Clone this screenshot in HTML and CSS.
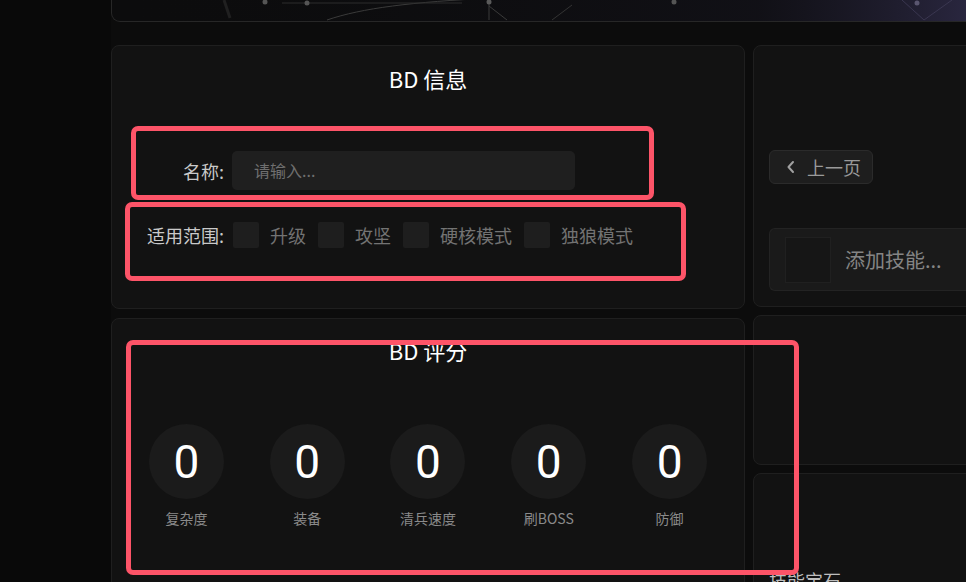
FILE: index.html
```html
<!DOCTYPE html>
<html lang="zh">
<head>
<meta charset="utf-8">
<title>BD</title>
<link rel="stylesheet" href="styles.css">
</head>
<body>
<div class="app">
  <aside class="sidebar"></aside>
  <main class="main">
    <div class="banner">
      <svg class="banner-art" width="860" height="21" viewBox="0 0 860 21">
        <defs>
          <linearGradient id="glow" x1="0" x2="1" y1="0" y2="0">
            <stop offset="0" stop-color="#0c0c0e" stop-opacity="0"/>
            <stop offset="0.75" stop-color="#14131c" stop-opacity="0.6"/>
            <stop offset="1" stop-color="#2a2740"/>
          </linearGradient>
        </defs>
        <rect x="0" y="0" width="860" height="21" fill="url(#glow)"/>
        <path d="M112 0 L118 18" stroke="#333" stroke-width="3" fill="none" opacity="0.5"/>
        <path d="M215 20 C250 8 300 2 380 -2" stroke="#3a3a3a" stroke-width="1" fill="none"/>
        <path d="M170 3 L350 3" stroke="#2c2c2c" stroke-width="1"/>
        <path d="M377 0 L377 20 M377 6 L395 20" stroke="#3a3a3a" stroke-width="1" fill="none"/>
        <path d="M440 20 L460 5" stroke="#333" stroke-width="1" fill="none"/>
        <path d="M790 0 L812 20 L840 0" stroke="#3a3650" stroke-width="1" fill="none"/>
        <circle cx="153" cy="2" r="2.5" fill="#555"/>
        <circle cx="195" cy="3" r="2.5" fill="#555"/>
        <circle cx="377" cy="2" r="2.5" fill="#5a5a5a"/>
        <circle cx="562" cy="2" r="2.5" fill="#555"/>
        <circle cx="805" cy="3" r="2.5" fill="#5a5670"/>
      </svg>
    </div>
    <div class="grid">
      <div class="col">
        <section class="card card-info">
          <h2 class="card-title">BD 信息</h2>
          <div class="form">
            <div class="form-row row-name">
              <label class="form-label">名称:</label>
              <div class="input">请输入...</div>
            </div>
            <div class="form-row row-scope">
              <label class="form-label">适用范围:</label>
              <div class="options">
                <span class="option"><span class="check"></span>升级</span>
                <span class="option"><span class="check"></span>攻坚</span>
                <span class="option"><span class="check"></span>硬核模式</span>
                <span class="option"><span class="check"></span>独狼模式</span>
              </div>
            </div>
          </div>
        </section>
        <section class="card card-score">
          <h2 class="card-title">BD 评分</h2>
          <div class="scores">
            <div class="score"><div class="score-circle">0</div><div class="score-label">复杂度</div></div>
            <div class="score"><div class="score-circle">0</div><div class="score-label">装备</div></div>
            <div class="score"><div class="score-circle">0</div><div class="score-label">清兵速度</div></div>
            <div class="score"><div class="score-circle">0</div><div class="score-label">刷BOSS</div></div>
            <div class="score"><div class="score-circle">0</div><div class="score-label">防御</div></div>
          </div>
        </section>
      </div>
      <div class="col">
        <section class="card card-skills">
          <button class="prev-btn">
            <svg width="10" height="14" viewBox="0 0 10 14"><path d="M7 2 L2.5 7 L7 12" stroke="#a0a0a0" stroke-width="2" fill="none" stroke-linecap="round" stroke-linejoin="round"/></svg>
            <span>上一页</span>
          </button>
          <div class="skill-add">
            <span class="skill-slot"></span>
            <span class="skill-text">添加技能...</span>
          </div>
        </section>
        <section class="card card-mid"></section>
        <section class="card card-gems">
          <div class="gems-title">技能宝石</div>
        </section>
      </div>
    </div>
  </main>
  <div class="mark mark-1"></div>
  <div class="mark mark-2"></div>
  <div class="mark mark-3"></div>
</div>
</body>
</html>
```

FILE: styles.css
```css
* { box-sizing: border-box; }
html, body {
  margin: 0;
  padding: 0;
  background: #0b0b0b;
}
body {
  font-family: "Noto Sans CJK SC", "Noto Sans", sans-serif;
  color: #ddd;
}
.app {
  position: relative;
  display: flex;
  width: 966px;
  height: 582px;
  overflow: hidden;
}
.sidebar {
  flex: none;
  width: 111px;
  background: #090909;
}
.main {
  flex: none;
  width: 1100px;
  display: flex;
  flex-direction: column;
  background: #0c0c0c;
}
.banner {
  flex: none;
  height: 22px;
  border: 1px solid #272727;
  border-top: none;
  border-radius: 0 0 9px 9px;
  background: #0c0c0d;
  overflow: hidden;
}
.banner-art { display: block; }
.grid {
  flex: none;
  margin-top: 23px;
  display: grid;
  grid-template-columns: 634px 420px;
  column-gap: 8px;
}
.col {
  display: flex;
  flex-direction: column;
  gap: 8px;
}
.col:first-child { gap: 9px; }
.card {
  flex: none;
  background: #121212;
  border: 1px solid #1f1f1f;
  border-radius: 8px;
}
.card-title {
  margin: 0;
  padding-top: 17px;
  text-align: center;
  font-size: 22px;
  line-height: 30px;
  font-weight: 400;
  color: #fff;
}
.card-info { height: 264px; }
.form {
  margin-top: 58px;
  padding-left: 19px;
  display: flex;
  flex-direction: column;
  gap: 32px;
}
.form-row {
  display: flex;
  align-items: center;
  gap: 8px;
}
.form-label {
  flex: none;
  width: 93px;
  text-align: right;
  font-size: 18px;
  color: #c9c9c9;
}
.input {
  flex: none;
  width: 343px;
  height: 39px;
  border-radius: 5px;
  background: #1f1f1f;
  padding-left: 22px;
  font-size: 16px;
  line-height: 39px;
  color: #6f6f6f;
}
.options {
  display: flex;
  align-items: center;
  gap: 12px;
  margin-left: 1px;
}
.option {
  display: flex;
  align-items: center;
  gap: 11px;
  font-size: 18px;
  color: #737373;
}
.check {
  flex: none;
  width: 26px;
  height: 26px;
  border-radius: 2px;
  background: #1e1e1e;
}
.card-score { height: 300px; }
.card-score .card-title { padding-top: 16px; }
.scores {
  margin-top: 59px;
  padding: 0 14px;
  display: flex;
}
.score {
  flex: 1;
  display: flex;
  flex-direction: column;
  align-items: center;
}
.score-circle {
  flex: none;
  width: 75px;
  height: 75px;
  border-radius: 50%;
  background: #1b1b1b;
  display: flex;
  align-items: center;
  justify-content: center;
  font-family: Roboto, "Noto Sans", sans-serif;
  font-size: 46px;
  color: #fff;
}
.score-label {
  margin-top: 9px;
  font-size: 14px;
  line-height: 20px;
  color: #8a8a8a;
}
.card-skills {
  height: 262px;
  padding: 104px 0 0 15px;
}
.prev-btn {
  display: flex;
  align-items: center;
  gap: 11px;
  width: 104px;
  height: 34px;
  padding: 0 0 0 16px;
  border: 1px solid #2b2b2b;
  border-radius: 6px;
  background: #1e1e1e;
  font-family: inherit;
  font-size: 18px;
  color: #9a9a9a;
}
.skill-add {
  margin-top: 44px;
  height: 63px;
  display: flex;
  align-items: center;
  gap: 14px;
  padding-left: 15px;
  border: 1px solid #232323;
  border-right: none;
  border-radius: 6px 0 0 6px;
  background: #1a1a1a;
}
.skill-slot {
  flex: none;
  width: 46px;
  height: 46px;
  border: 1px solid #202020;
  background: #161616;
}
.skill-text {
  font-size: 20px;
  color: #858585;
}
.card-mid { height: 150px; }
.card-gems {
  height: 200px;
  padding: 93px 0 0 15px;
}
.gems-title {
  font-size: 18px;
  color: #bdbdbd;
}
.mark {
  position: absolute;
  border: 5px solid #fd5468;
  border-radius: 7px;
  pointer-events: none;
}
.mark-1 { left: 131px; top: 126px; width: 523px; height: 74px; }
.mark-2 { left: 125px; top: 202px; width: 561px; height: 79px; }
.mark-3 { left: 126px; top: 340px; width: 673px; height: 235px; }
```
